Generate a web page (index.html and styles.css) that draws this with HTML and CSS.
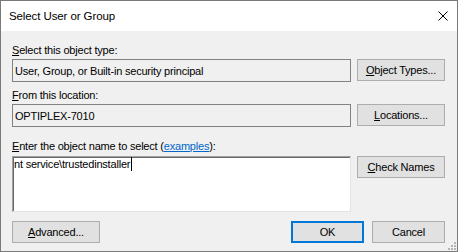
FILE: index.html
```html
<!DOCTYPE html>
<html>
<head>
<meta charset="utf-8">
<link rel="stylesheet" href="styles.css">
</head>
<body>
<div class="window">
  <div class="titlebar">
    <span class="title">Select User or Group</span>
    <svg class="close" width="10" height="10" viewBox="0 0 10 10"><path d="M0.5 0.5 L9.5 9.5 M9.5 0.5 L0.5 9.5" stroke="#000" stroke-width="1" fill="none"/></svg>
  </div>
  <div class="content">
    <div class="label"><u>S</u>elect this object type:</div>
    <div class="row">
      <div class="field">User, Group, or Built-in security principal</div>
      <div class="btn"><u>O</u>bject Types...</div>
    </div>
    <div class="label label2"><u>F</u>rom this location:</div>
    <div class="row">
      <div class="field">OPTIPLEX-7010</div>
      <div class="btn"><u>L</u>ocations...</div>
    </div>
    <div class="label label3"><u>E</u>nter the object name to select (<span class="link">examples</span>):</div>
    <div class="row row3">
      <div class="namebox"><span>nt service\trustedinstaller</span><span class="caret"></span></div>
      <div class="btn"><u>C</u>heck Names</div>
    </div>
    <div class="bottom">
      <div class="btn"><u>A</u>dvanced...</div>
      <div class="spacer"></div>
      <div class="btn small default">OK</div>
      <div class="btn small">Cancel</div>
    </div>
  </div>
  <svg class="grip" width="8" height="8" viewBox="0 0 8 8">
    <g fill="#b4b4b4">
      <rect x="6" y="0" width="2" height="2"/>
      <rect x="3" y="3" width="2" height="2"/>
      <rect x="6" y="3" width="2" height="2"/>
      <rect x="0" y="6" width="2" height="2"/>
      <rect x="3" y="6" width="2" height="2"/>
      <rect x="6" y="6" width="2" height="2"/>
    </g>
  </svg>
</div>
</body>
</html>
```
FILE: styles.css
```css
html, body {
  margin: 0;
  padding: 0;
  background: #f0f0f0;
}
.window {
  position: relative;
  width: 458px;
  height: 252px;
  box-sizing: border-box;
  border: 1px solid #7a7a7a;
  background: #f0f0f0;
  display: flex;
  flex-direction: column;
  font-family: "Liberation Sans", Arial, sans-serif;
  font-size: 11px;
  color: #000;
  letter-spacing: -0.2px;
}
.titlebar {
  height: 30px;
  background: #fff;
  display: flex;
  align-items: center;
  padding-left: 8px;
  padding-right: 9px;
}
.title {
  font-size: 11.5px;
  letter-spacing: -0.1px;
  line-height: 14px;
}
.close {
  margin-left: auto;
  margin-top: -1px;
}
.content {
  display: flex;
  flex-direction: column;
  padding: 13px 12px 0 11px;
}
.label {
  line-height: 13px;
  height: 13px;
  white-space: nowrap;
}
.label2 {
  margin-top: 7px;
}
.label3 {
  margin-top: 13px;
}
.link {
  color: #0066cc;
  text-decoration: underline;
}
.row {
  display: flex;
  gap: 6px;
  margin-top: 2px;
  align-items: flex-start;
}
.row3 {
  margin-top: 3px;
}
.field {
  flex: 1;
  height: 23px;
  box-sizing: border-box;
  border: 1px solid #828282;
  background: #f0f0f0;
  padding-left: 2px;
  display: flex;
  align-items: center;
  white-space: nowrap;
}
.namebox {
  flex: 1;
  height: 56px;
  box-sizing: border-box;
  background: #fff;
  border-top: 1px solid #a0a0a0;
  border-left: 1px solid #a0a0a0;
  border-right: 1px solid #e3e3e3;
  border-bottom: 1px solid #e3e3e3;
  box-shadow: inset 1px 1px 0 #696969;
  padding: 1px 0 0 1px;
  line-height: 13px;
  display: flex;
  align-items: flex-start;
  white-space: nowrap;
}
.caret {
  display: inline-block;
  width: 1px;
  height: 14px;
  background: #000;
  margin-left: 1px;
  margin-top: -1px;
}
.btn {
  width: 88px;
  height: 22px;
  box-sizing: border-box;
  border: 1px solid #adadad;
  background: #e1e1e1;
  display: flex;
  align-items: center;
  justify-content: center;
  white-space: nowrap;
  flex: none;
}
.btn.small {
  width: 73px;
}
.btn.default {
  border: 2px solid #0078d7;
}
.bottom {
  display: flex;
  gap: 8px;
  margin-top: 9px;
}
.spacer {
  flex: 1;
}
.grip {
  position: absolute;
  right: 1px;
  bottom: 1px;
}
```
